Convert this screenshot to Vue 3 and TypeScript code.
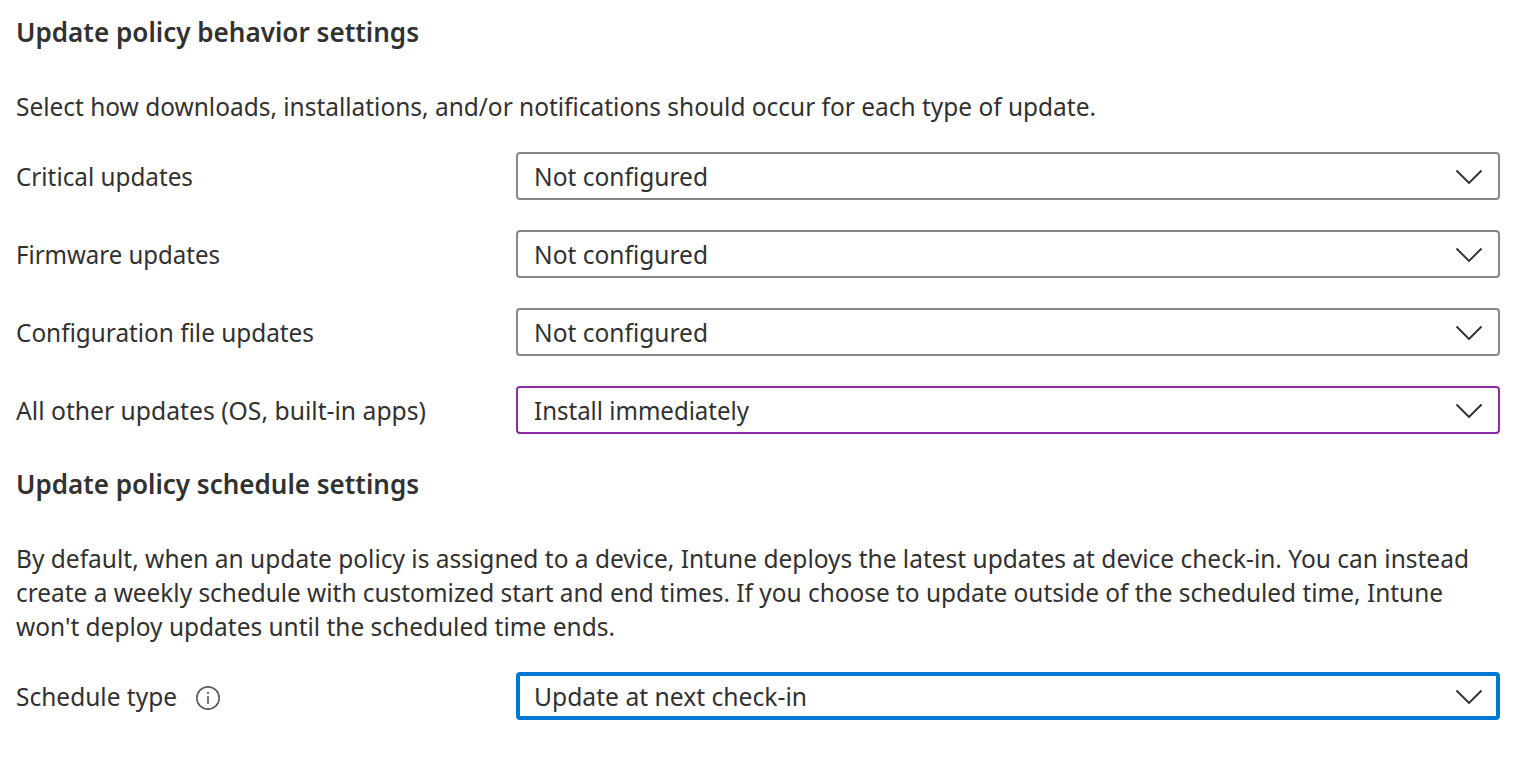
<script setup lang="ts">
interface Field { label: string; value: string; width: number; valueWidth: number; state: string }

const fields: Field[] = [
  { label: 'Critical updates', value: 'Not configured', width: 177, valueWidth: 174, state: '' },
  { label: 'Firmware updates', value: 'Not configured', width: 204, valueWidth: 174, state: '' },
  { label: 'Configuration file updates', value: 'Not configured', width: 298, valueWidth: 174, state: '' },
  { label: 'All other updates (OS, built-in apps)', value: 'Install immediately', width: 410, valueWidth: 215, state: 'edited' },
]
const description: { text: string; width: number }[] = [
  { text: 'By default, when an update policy is assigned to a device, Intune deploys the latest updates at device check-in. You can instead', width: 1453 },
  { text: 'create a weekly schedule with customized start and end times. If you choose to update outside of the scheduled time, Intune', width: 1427 },
  { text: "won't deploy updates until the scheduled time ends.", width: 599 },
]
</script>

<template>
  <main class="page">
    <h2><svg class="line" width="403" height="40"><text x="0" y="28" textLength="403" lengthAdjust="spacingAndGlyphs">Update policy behavior settings</text></svg></h2>
    <p class="intro"><svg class="line" width="1080" height="34"><text x="0" y="25" textLength="1080" lengthAdjust="spacingAndGlyphs">Select how downloads, installations, and/or notifications should occur for each type of update.</text></svg></p>
    <div v-for="f in fields" :key="f.label" class="row">
      <svg class="line label" :width="f.width" height="38"><text x="0" y="29" :textLength="f.width" lengthAdjust="spacingAndGlyphs">{{ f.label }}</text></svg>
      <div class="select" :class="f.state">
        <svg class="line" :width="f.valueWidth" height="38"><text x="0" y="29" :textLength="f.valueWidth" lengthAdjust="spacingAndGlyphs">{{ f.value }}</text></svg>
        <svg class="chevron" width="28" height="16"><path d="M1.5 2.5 14 15 26.5 2.5" /></svg>
      </div>
    </div>
    <h2 class="second"><svg class="line" width="403" height="40"><text x="0" y="28" textLength="403" lengthAdjust="spacingAndGlyphs">Update policy schedule settings</text></svg></h2>
    <div class="description">
      <svg v-for="l in description" :key="l.text" class="line" :width="l.width" height="34"><text x="0" y="26" :textLength="l.width" lengthAdjust="spacingAndGlyphs">{{ l.text }}</text></svg>
    </div>
    <div class="row">
      <div class="label schedule">
        <svg class="line" width="161" height="38"><text x="0" y="29" textLength="161" lengthAdjust="spacingAndGlyphs">Schedule type</text></svg>
        <svg class="info" width="26" height="28"><circle cx="13" cy="16" r="11.2" /><path d="M13 14v8M13 10v2" /></svg>
      </div>
      <div class="select focused">
        <svg class="line" width="273" height="38"><text x="0" y="29" textLength="273" lengthAdjust="spacingAndGlyphs">Update at next check-in</text></svg>
        <svg class="chevron" width="28" height="16"><path d="M1.5 2.5 14 15 26.5 2.5" /></svg>
      </div>
    </div>
  </main>
</template>

<style>
body { background: #fff; }
</style>
<style scoped>
.page { box-sizing: border-box; width: 1540px; height: 766px; padding: 14px 40px 0 16px; background: #fff; color: #323130; font: 26px "Noto Sans", "Open Sans", sans-serif; }
h2 { margin: 0; height: 40px; font-size: 27.5px; font-weight: 600; }
.line { display: block; overflow: visible; fill: currentColor; flex-shrink: 0; }
.intro { margin: 37px 0 27px; height: 34px; }
.row { display: grid; grid-template-columns: 500px 984px; height: 48px; margin-bottom: 30px; align-items: center; }
.select { box-sizing: border-box; height: 48px; border: 2px solid #8a8886; border-radius: 4px; padding: 0 15px 0 16px; display: flex; align-items: center; justify-content: space-between; }
.edited { border-color: #8a2da5; }
.focused { border: 4px solid #0078d4; padding: 0 13px 0 14px; }
.chevron { fill: none; stroke: #323130; stroke-width: 1.9; }
.second { margin-top: 32px; }
.description { margin: 36px 0 28px; }
.schedule { display: flex; align-items: center; }
.info { margin-left: 18px; fill: none; stroke: #605e5c; stroke-width: 1.7; }
</style>
